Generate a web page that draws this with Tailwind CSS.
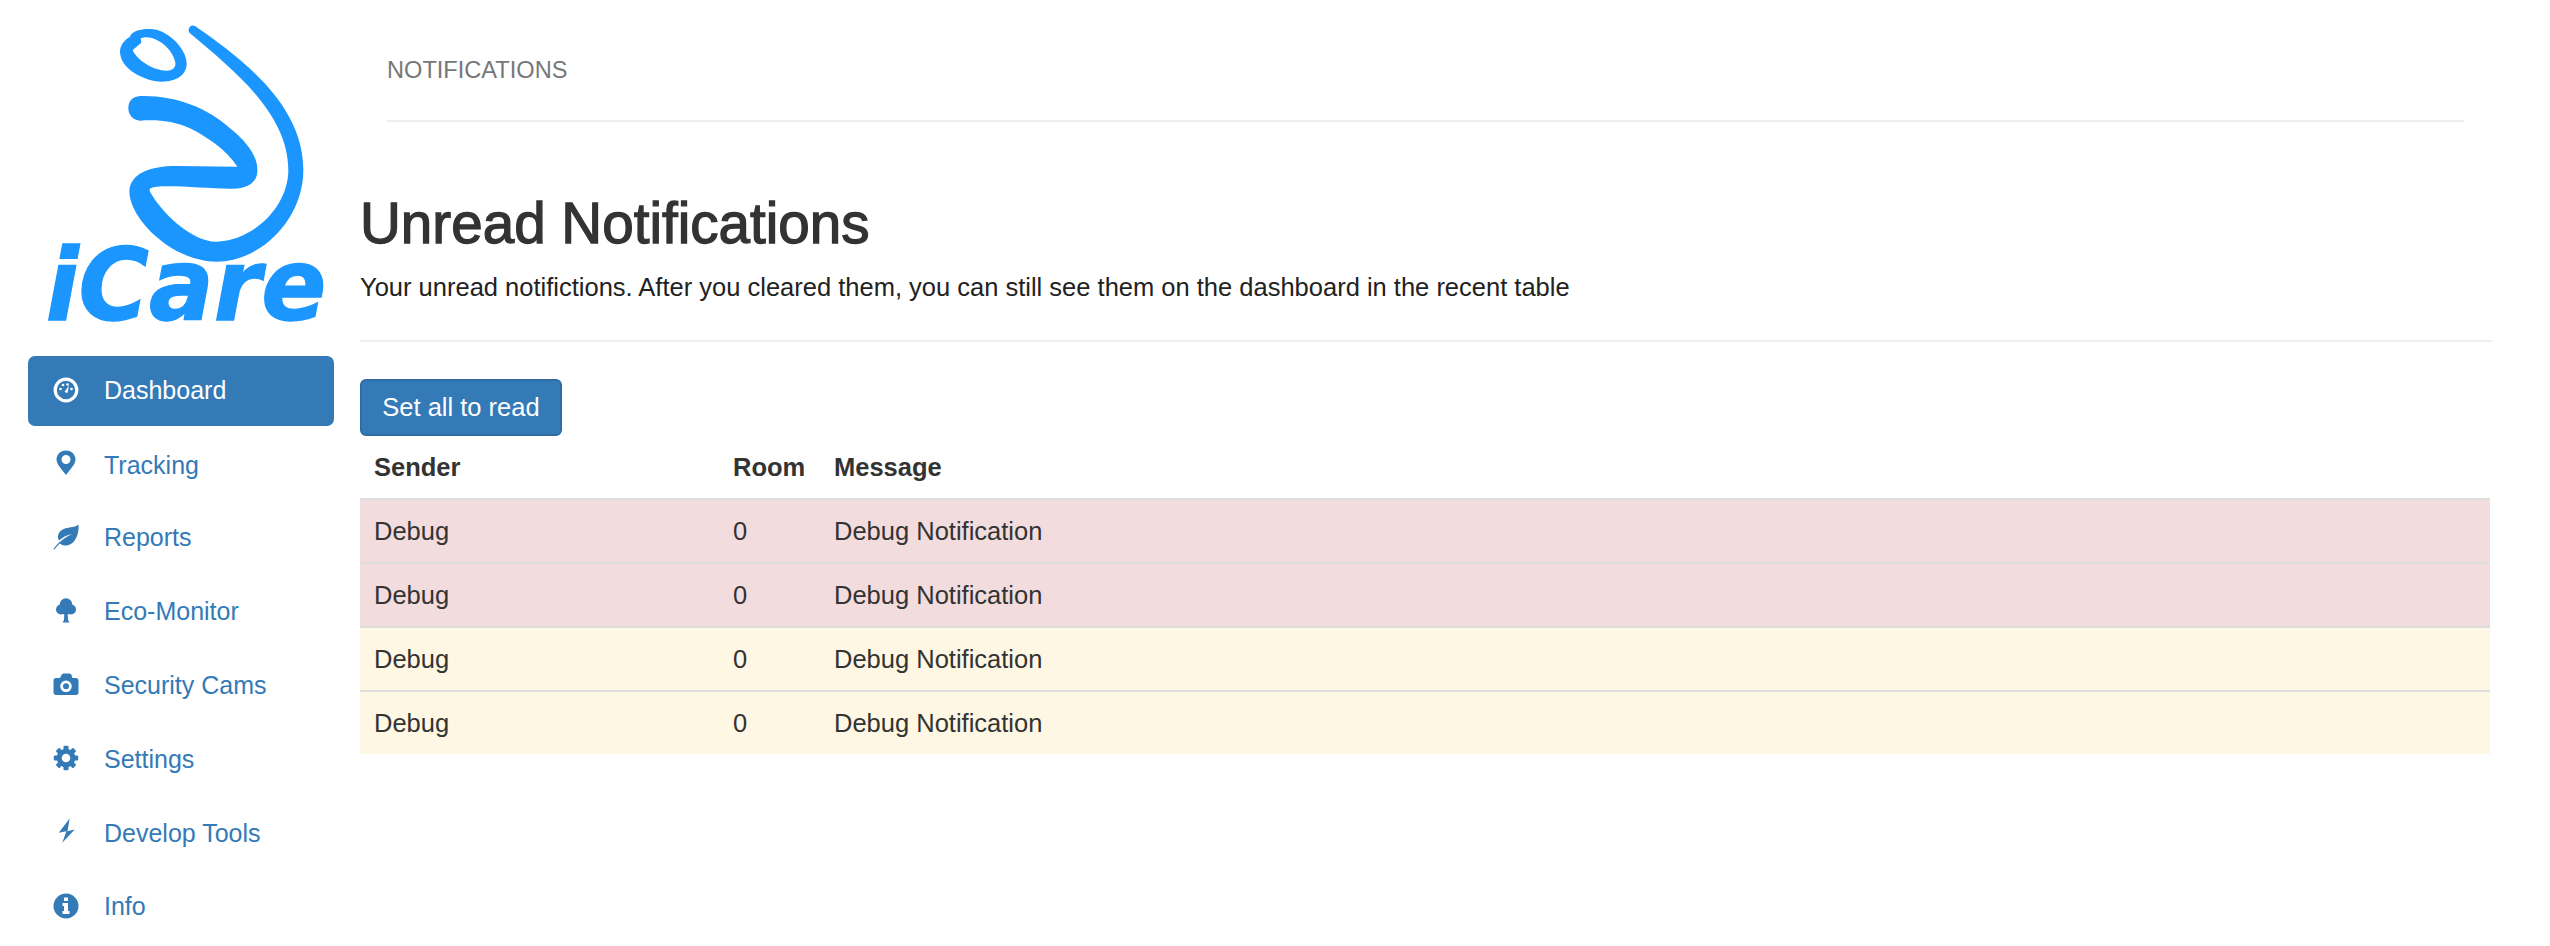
<!DOCTYPE html>
<html lang="en">
<head>
  <meta charset="UTF-8" />
  <title>Notifications - iCare</title>
  <script src="https://cdn.jsdelivr.net/npm/@tailwindcss/browser@4"></script>
</head>
<body class="bg-white text-[#333] font-['Liberation_Sans',Arial,sans-serif] h-[946px] overflow-hidden flex">

  <!-- Sidebar -->
  <aside class="w-[360px] shrink-0">
    <svg viewBox="0 0 1080 1056" class="w-[360px] h-[352px] block mb-[4px]">
      <path fill="#1b96fe" fill-rule="evenodd" d="M390 110 C395 92 430 85 460 88 C510 95 560 150 560 190 C560 225 530 245 485 245 C430 243 360 205 360 155 C360 135 375 118 390 110 Z M422 115 L424 128 L398 150 C410 180 460 212 500 212 C520 212 528 200 526 188 C520 150 475 110 435 112 Z" />
      <path fill="#1b96fe" d="M420 288 C520 285 620 320 690 385 C740 425 775 470 772 515 C770 550 740 568 690 566 C620 565 520 555 470 560 C455 562 445 565 450 575 C480 630 570 725 650 725 C760 722 865 620 865 510 C865 340 700 210 570 100 C560 90 570 70 585 78 C740 185 910 320 910 510 C910 660 780 785 650 785 C520 785 390 660 388 575 C390 520 450 498 530 498 L712 500 C680 450 620 410 570 385 C520 362 470 358 420 362 C400 362 385 345 385 325 C385 300 400 290 420 288 Z" />
      <text x="137" y="960" textLength="842" lengthAdjust="spacingAndGlyphs" fill="#1b96fe" stroke="#1b96fe" stroke-width="4" font-family="DejaVu Sans" font-weight="700" font-style="italic" font-size="300">iCare</text>
    </svg>

    <nav class="pl-[28px] pr-[26px] flex flex-col gap-[3.7px] text-[25px] text-[#337ab7]">
      <a href="#" class="h-[70px] rounded-[7px] bg-[#337ab7] text-white flex items-center gap-[25px] pl-[25px]">
        <svg viewBox="0 0 26 26" class="w-[26px] h-[26px] -mt-[2px]" fill="currentColor">
          <circle cx="13" cy="13" r="10.8" fill="none" stroke="currentColor" stroke-width="3.2" />
          <circle cx="7.5" cy="12" r="1.3" /><circle cx="10" cy="8" r="1.3" /><circle cx="14.5" cy="7.5" r="1.3" /><circle cx="18.5" cy="12" r="1.3" />
          <path d="M11.5 15 L16 8.5 L14.5 16 Z" />
        </svg>
        Dashboard
      </a>
      <a href="#" class="h-[70px] flex items-center gap-[25px] pl-[25px]">
        <svg viewBox="0 0 26 26" class="w-[26px] h-[26px] -mt-[4px]" fill="currentColor">
          <path fill-rule="evenodd" d="M13 0.5 C7 0.5 3.5 5 3.5 9.5 C3.5 14.5 10 20.5 13 25 C16 20.5 22.5 14.5 22.5 9.5 C22.5 5 19 0.5 13 0.5 Z M13 5 a4.5 4.5 0 1 1 0 9 a4.5 4.5 0 1 1 0 -9 Z" />
        </svg>
        <span class="mt-[2px]">Tracking</span>
      </a>
      <a href="#" class="h-[70px] flex items-center gap-[25px] pl-[25px]">
        <svg viewBox="0 0 26 26" class="w-[26px] h-[26px] -mt-[2px]" fill="currentColor">
          <path d="M0.5 25 C3 21 5 19.5 8 17 C12 13.5 15 12 19 10 C14 11 10 13 6 16.5 C3 11 7 6 12 4.5 C17 3 22 3.5 25.5 0.5 C26 8 24 17 17 20.5 C13 22.5 9 21.5 7 19.5 C5 21 3 23 1.5 25.5 Z" />
        </svg>
        <span class="-mt-[2px]">Reports</span>
      </a>
      <a href="#" class="h-[70px] flex items-center gap-[25px] pl-[25px]">
        <svg viewBox="0 0 26 26" class="w-[26px] h-[26px] -mt-[2px]" fill="currentColor">
          <circle cx="13" cy="6.5" r="6.2" /><circle cx="8" cy="11.5" r="5" /><circle cx="18" cy="11.5" r="5" /><circle cx="13" cy="12" r="5" />
          <path d="M11.5 14 H14.5 L15 22 L16.5 24.5 H9.5 L11 22 Z" />
        </svg>
        Eco-Monitor
      </a>
      <a href="#" class="h-[70px] flex items-center gap-[25px] pl-[25px]">
        <svg viewBox="0 0 26 26" class="w-[26px] h-[26px] -mt-[2px]" fill="currentColor">
          <path fill-rule="evenodd" d="M3 6 H7 L8.5 3 C9 2 10 1.5 11 1.5 H16 C17 1.5 18 2 18.5 3 L19.5 6 H23 C24.5 6 25.5 7 25.5 8.5 V20.5 C25.5 22 24.5 23 23 23 H3 C1.5 23 0.5 22 0.5 20.5 V8.5 C0.5 7 1.5 6 3 6 Z M13 8.5 a5.8 5.8 0 1 0 0 11.6 a5.8 5.8 0 1 0 0 -11.6 Z" />
          <circle cx="13" cy="14.3" r="3" />
        </svg>
        Security Cams
      </a>
      <a href="#" class="h-[70px] flex items-center gap-[25px] pl-[25px]">
        <svg viewBox="0 0 26 26" class="w-[26px] h-[26px] -mt-[2px]" fill="currentColor">
          <circle cx="13" cy="13" r="6.8" fill="none" stroke="currentColor" stroke-width="5" />
          <g>
            <rect x="10.5" y="0.8" width="5" height="5" rx="1" />
            <rect x="10.5" y="20.2" width="5" height="5" rx="1" />
            <rect x="0.8" y="10.5" width="5" height="5" rx="1" />
            <rect x="20.2" y="10.5" width="5" height="5" rx="1" />
            <rect x="10.5" y="0.8" width="5" height="5" rx="1" transform="rotate(45 13 13)" />
            <rect x="10.5" y="20.2" width="5" height="5" rx="1" transform="rotate(45 13 13)" />
            <rect x="0.8" y="10.5" width="5" height="5" rx="1" transform="rotate(45 13 13)" />
            <rect x="20.2" y="10.5" width="5" height="5" rx="1" transform="rotate(45 13 13)" />
          </g>
        </svg>
        Settings
      </a>
      <a href="#" class="h-[70px] flex items-center gap-[25px] pl-[25px]">
        <svg viewBox="0 0 26 26" class="w-[26px] h-[26px] -mt-[4px]" fill="currentColor">
          <path d="M16.7 0.5 L5.7 14.8 L13.4 13.2 L9.3 24.8 L21.7 11.5 L14.4 13.2 Z" />
        </svg>
        <span class="mt-[1px]">Develop Tools</span>
      </a>
      <a href="#" class="h-[70px] flex items-center gap-[25px] pl-[25px]">
        <svg viewBox="0 0 26 26" class="w-[26px] h-[26px] -mt-[2px]" fill="currentColor">
          <path fill-rule="evenodd" d="M13 0.5 a12.5 12.5 0 1 0 0 25 a12.5 12.5 0 1 0 0 -25 Z M11 4.5 H15 V8 H11 Z M9.5 10 H15 V18 H16.5 V21 H9.5 V18 H11 V13 H9.5 Z" />
        </svg>
        <span class="-mt-[1px]">Info</span>
      </a>
    </nav>
  </aside>

  <!-- Content -->
  <main class="flex-1 pr-[58px]">
    <div class="ml-[27px] mr-[28px] h-[122px] border-b-2 border-[#eee] pt-[52px]">
      <p class="text-[23.6px] leading-[36px] text-[#777]">NOTIFICATIONS</p>
    </div>

    <h1 class="mt-[70px] text-[56.6px] leading-[64px] text-[#333] font-normal [-webkit-text-stroke:1.3px_#333]">Unread Notifications</h1>
    <p class="mt-[13px] text-[25.5px] leading-[36px] text-[#222]">Your unread notifictions. After you cleared them, you can still see them on the dashboard in the recent table</p>
    <div class="mt-[35px] border-t-2 border-[#eee]"></div>

    <button class="mt-[37px] block w-[202px] h-[57px] rounded-[6px] bg-[#337ab7] border-2 border-[#2e6da4] text-white text-[25.5px]">Set all to read</button>

    <table class="w-[calc(100%-2px)] border-collapse text-[25.5px] text-[#333] table-fixed">
      <thead>
        <tr class="h-[63px] border-b-2 border-[#ddd]">
          <th class="w-[359px] pl-[14px] text-left font-bold">Sender</th>
          <th class="w-[101px] pl-[14px] text-left font-bold">Room</th>
          <th class="pl-[14px] text-left font-bold">Message</th>
        </tr>
      </thead>
      <tbody>
        <tr class="h-[64px] bg-[#f2dcde]">
          <td class="pl-[14px]">Debug</td><td class="pl-[14px]">0</td><td class="pl-[14px]">Debug Notification</td>
        </tr>
        <tr class="h-[64px] bg-[#f2dcde] border-t-2 border-[#ddd]">
          <td class="pl-[14px]">Debug</td><td class="pl-[14px]">0</td><td class="pl-[14px]">Debug Notification</td>
        </tr>
        <tr class="h-[64px] bg-[#fdf7e3] border-t-2 border-[#ddd]">
          <td class="pl-[14px]">Debug</td><td class="pl-[14px]">0</td><td class="pl-[14px]">Debug Notification</td>
        </tr>
        <tr class="h-[63px] bg-[#fdf7e3] border-t-2 border-[#ddd]">
          <td class="pl-[14px]">Debug</td><td class="pl-[14px]">0</td><td class="pl-[14px]">Debug Notification</td>
        </tr>
      </tbody>
    </table>
  </main>

</body>
</html>
